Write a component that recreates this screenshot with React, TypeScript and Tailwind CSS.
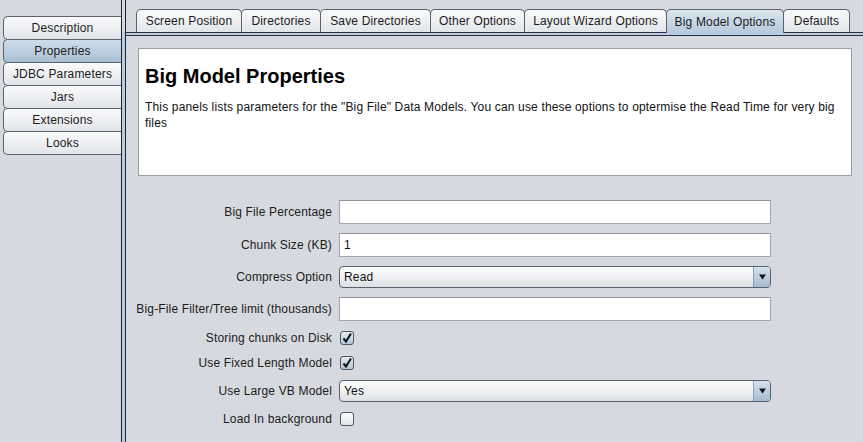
import React from 'react'
import clsx from 'clsx'

const sideItems = ['Description', 'Properties', 'JDBC Parameters', 'Jars', 'Extensions', 'Looks']

// widths include the shared 1px border with the next tab
const tabs = [
  { label: 'Screen Position', w: 'w-[106px]' },
  { label: 'Directories', w: 'w-[80px]' },
  { label: 'Save Directories', w: 'w-[111px]' },
  { label: 'Other Options', w: 'w-[95px]' },
  { label: 'Layout Wizard Options', w: 'w-[143px]' },
  { label: 'Big Model Options', w: 'w-[118px]', active: true },
  { label: 'Defaults', w: 'w-[67px]' },
]

function SideButton({ label, active, first }: { label: string; active?: boolean; first?: boolean }) {
  return (
    <div
      className={clsx(
        'flex h-[24px] items-center justify-center rounded-l-[5px] border border-r-0 border-[#5d636d] text-[12px] text-[#1c1c1c]',
        !first && '-mt-px',
        active
          ? 'bg-linear-to-b from-[#d0dcea] to-[#a9bfd5]'
          : 'bg-linear-to-b from-[#fbfbfc] to-[#e1e4e9]'
      )}
    >
      {label}
    </div>
  )
}

function Tab({ label, w, active, first }: { label: string; w: string; active?: boolean; first?: boolean }) {
  return (
    <div
      className={clsx(
        'flex items-center justify-center whitespace-nowrap rounded-t-[5px] border border-b-0 border-[#5d636d] text-[12px] text-[#1c1c1c]',
        w,
        !first && '-ml-px',
        active
          ? 'relative z-10 -mb-px h-[24px] bg-linear-to-b from-[#dce6ef] to-[#b6c9dc]'
          : 'h-[23px] bg-linear-to-b from-[#fbfbfc] to-[#e1e4e9]'
      )}
    >
      {label}
    </div>
  )
}

function TextField({ value }: { value?: string }) {
  return (
    <div className="flex h-[24px] w-[432px] items-center border border-[#a3a7ad] border-t-[#8e9299] bg-white pl-[4px] text-[12px] text-[#111]">
      {value}
    </div>
  )
}

function Combo({ value }: { value: string }) {
  return (
    <div className="flex h-[22px] w-[432px] rounded-[4px] border border-[#57606c] bg-linear-to-b from-[#fdfdfe] via-[#f0f1f3] to-[#dcdfe4]">
      <div className="flex flex-1 items-center pl-[4px] text-[12px] text-[#111]">{value}</div>
      <div className="flex w-[17px] items-center justify-center rounded-r-[3px] border-l border-[#8ea2b7] bg-linear-to-b from-[#d6e2ed] to-[#a5bbd0]">
        <svg width="7" height="6" viewBox="0 0 7 6">
          <path d="M0 0.5h7L3.5 5.5z" fill="#111" />
        </svg>
      </div>
    </div>
  )
}

function Check({ checked }: { checked?: boolean }) {
  return (
    <div
      className={clsx(
        'ml-[1px] flex h-[14px] w-[14px] items-center justify-center rounded-[3px] border border-[#4f5764]',
        checked ? 'bg-linear-to-b from-[#e3ebf3] to-[#b2c6da]' : 'bg-linear-to-b from-[#fdfdfd] to-[#e2e5e9]'
      )}
    >
      {checked && (
        <svg width="12" height="12" viewBox="0 0 12 12">
          <path d="M2.5 6.5L5 9.5L10 1.5" fill="none" stroke="#111" strokeWidth="2" />
        </svg>
      )}
    </div>
  )
}

function Row({ label, h, children }: { label: string; h: string; children: React.ReactNode }) {
  return (
    <div className={clsx('flex items-center', h)}>
      <div className="flex w-[196px] shrink-0 justify-end">
        <span className="whitespace-nowrap text-[12px] text-[#1c1c1c]">{label}</span>
      </div>
      <div className="ml-[7px] flex items-center">{children}</div>
    </div>
  )
}

export default function App() {
  return (
    <div className="flex h-[442px] w-[863px] overflow-hidden bg-[#d6d9df] font-['Liberation_Sans',Arial,sans-serif] tracking-[0.16px]">
      {/* left list */}
      <div className="w-[121px] shrink-0 pl-[3px] pt-[16px]">
        {sideItems.map((s, i) => (
          <SideButton key={s} label={s} active={s === 'Properties'} first={i === 0} />
        ))}
      </div>

      {/* split divider */}
      <div className="flex w-[5px] shrink-0 flex-col border-x border-[#1f2530]">
        <div className="h-[32px]" />
        <div className="flex-1 bg-[#b9cde2]" />
      </div>

      {/* right side */}
      <div className="flex flex-1 flex-col">
        <div className="flex pl-[10px] pt-[9px]">
          {tabs.map((t, i) => (
            <Tab key={t.label} label={t.label} w={t.w} active={t.active} first={i === 0} />
          ))}
        </div>
        <div className="h-[4px] border-y border-[#2a303b] bg-[#b9cde2]" />

        <div className="pl-[12px] pr-[11px] pt-[12px]">
          <div className="h-[128px] border border-[#9b9fa6] bg-white px-[6px] pt-[15px]">
            <h1 className="text-[20px] font-bold leading-[24px] tracking-normal text-black">Big Model Properties</h1>
            <p className="mt-[11px] text-[12px] leading-[16px] text-[#111]">
              This panels lists parameters for the "Big File" Data Models. You can use these options to optermise the Read
              Time for very big files
            </p>
          </div>
        </div>

        <div className="ml-[10px] mt-[24px] flex flex-col gap-[9px]">
          <Row label="Big File Percentage" h="h-[24px]">
            <TextField />
          </Row>
          <Row label="Chunk Size (KB)" h="h-[24px]">
            <TextField value="1" />
          </Row>
          <Row label="Compress Option" h="h-[22px]">
            <Combo value="Read" />
          </Row>
          <Row label="Big-File Filter/Tree limit (thousands)" h="h-[24px]">
            <TextField />
          </Row>
          <Row label="Storing chunks on Disk" h="h-[16px]">
            <Check checked />
          </Row>
          <Row label="Use Fixed Length Model" h="h-[16px]">
            <Check checked />
          </Row>
          <Row label="Use Large VB Model" h="h-[22px]">
            <Combo value="Yes" />
          </Row>
          <Row label="Load In background" h="h-[16px]">
            <Check />
          </Row>
        </div>
      </div>
    </div>
  )
}
